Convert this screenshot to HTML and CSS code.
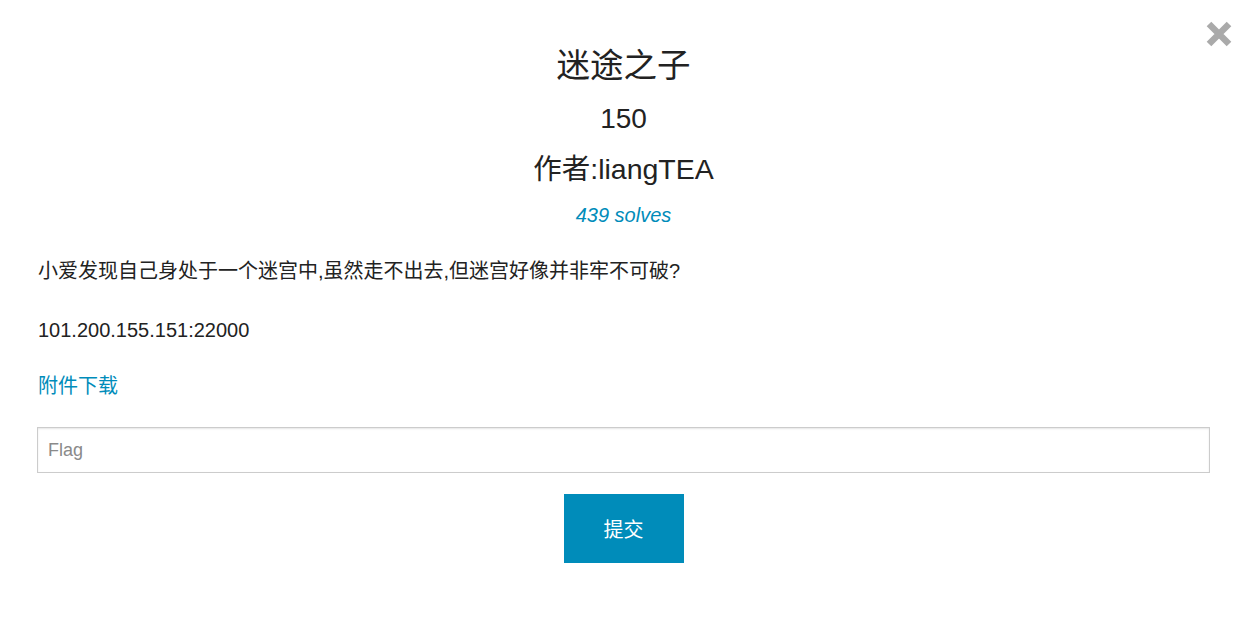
FILE: index.html
```html
<!DOCTYPE html>
<html lang="zh-CN">
<head>
<meta charset="utf-8">
<title>迷途之子</title>
<link rel="stylesheet" href="styles.css">
</head>
<body>
<div class="modal">
  <a class="close" href="#" aria-label="close">
    <svg width="28" height="28" viewBox="0 0 28 28"><path d="M4 4 L24 24 M24 4 L4 24" stroke="#aaaaaa" stroke-width="6.5" fill="none"/></svg>
  </a>
  <h2 class="title">迷途之子</h2>
  <h3 class="points">150</h3>
  <h3 class="author">作者:liangTEA</h3>
  <div class="solves"><a href="#">439 solves</a></div>
  <p class="desc">小爱发现自己身处于一个迷宫中,虽然走不出去,但迷宫好像并非牢不可破?</p>
  <p class="desc">101.200.155.151:22000</p>
  <p class="desc"><a href="#">附件下载</a></p>
  <form class="flag-form">
    <input class="flag-input" type="text" placeholder="Flag">
    <div class="btn-row"><button class="submit" type="button">提交</button></div>
  </form>
</div>
</body>
</html>
```
FILE: styles.css
```css
html, body {
  margin: 0;
  padding: 0;
  background: #ffffff;
}
body {
  font-family: "Liberation Sans", "Noto Sans CJK SC", sans-serif;
  color: #222222;
}
a {
  color: #008cba;
  text-decoration: none;
}
.modal {
  position: relative;
  padding: 46px 29px 0 37px;
}
.close {
  position: absolute;
  top: 20px;
  right: 6px;
  display: block;
  width: 28px;
  height: 28px;
}
.close svg { display: block; }
.title {
  margin: 0;
  text-align: center;
  font-weight: normal;
  font-size: 33.5px;
  line-height: 40px;
}
.points, .author {
  margin: 0;
  text-align: center;
  font-weight: normal;
  font-size: 28px;
  line-height: 36px;
}
.points { margin-top: 15px; }
.author { margin-top: 14px; font-size: 28.5px; }
.solves {
  margin-top: 15px;
  text-align: center;
  font-size: 20px;
  line-height: 26px;
  font-style: italic;
}
.desc {
  margin: 29px 0 0 1px;
  font-size: 20px;
  line-height: 28px;
}
.desc + .desc { margin-top: 31px; }
.desc + .desc + .desc { margin-top: 28px; }
.flag-form {
  margin: 27px 0 0;
}
.flag-input {
  display: block;
  box-sizing: border-box;
  width: 100%;
  height: 46px;
  margin: 0;
  padding: 0 10px;
  border: 1px solid #cccccc;
  border-radius: 0;
  box-shadow: inset 0 1px 2px rgba(0, 0, 0, 0.1);
  font-family: inherit;
  font-size: 18px;
  color: #222222;
  outline: none;
}
.flag-input::placeholder { color: #8a8a8a; }
.btn-row {
  display: flex;
  justify-content: center;
  margin-top: 21px;
}
.submit {
  width: 120px;
  height: 69px;
  border: 0;
  background: #008cba;
  color: #ffffff;
  font-family: inherit;
  font-size: 20px;
  cursor: pointer;
}
```
